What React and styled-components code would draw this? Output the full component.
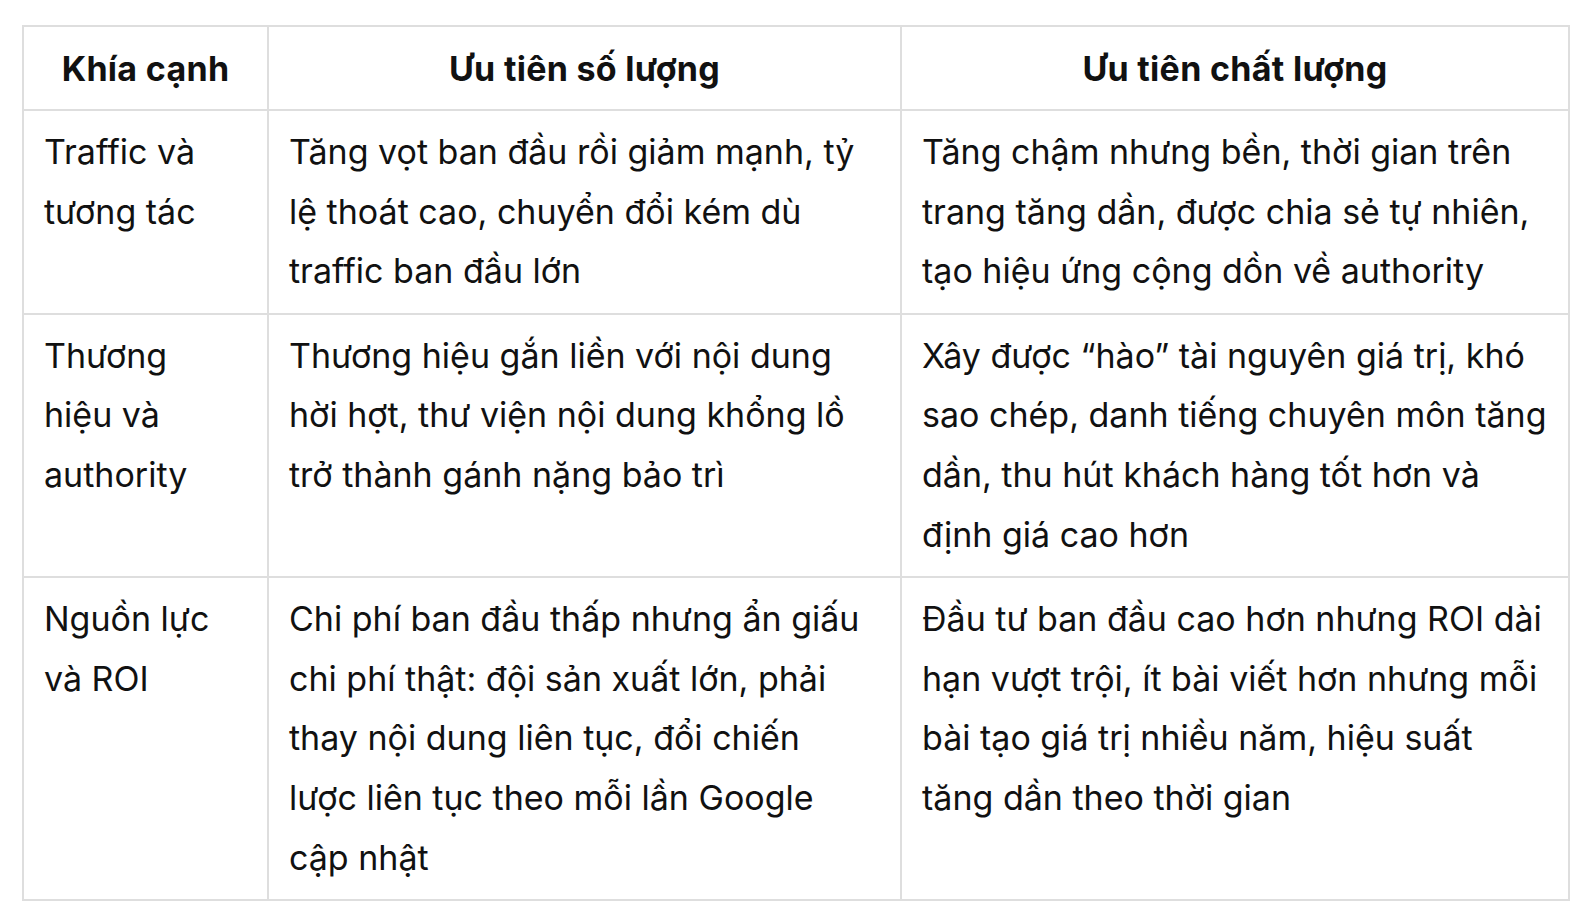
import styled, { createGlobalStyle } from "styled-components";

const GlobalStyle = createGlobalStyle`
  html, body {
    margin: 0;
    padding: 0;
    background: #ffffff;
  }
  body {
    font-family: Inter, "Noto Sans", sans-serif;
    color: #111111;
  }
`;

const Page = styled.div`
  padding: 25px 24px 20px 22px;
`;

const Table = styled.table`
  width: 1546px;
  border-collapse: collapse;
  table-layout: fixed;
  border: 2px solid #dedede;
`;

const Col = styled.col`
  width: ${(p) => p.$w}px;
`;

const HeadCell = styled.th`
  border: 2px solid #dedede;
  padding: 12px 20px 11px;
  font-size: 34px;
  line-height: 59px;
  font-weight: 700;
  text-align: center;
  letter-spacing: 0.3px;
`;

const Cell = styled.td`
  border: 2px solid #dedede;
  padding: 11px ${(p) => p.$padRight || 20}px 12px 20px;
  font-size: 34px;
  line-height: 59.6px;
  font-weight: 400;
  vertical-align: top;
  text-align: left;
  letter-spacing: 0;
`;

const rows = [
  {
    aspect: "Traffic và tương tác",
    quantity:
      "Tăng vọt ban đầu rồi giảm mạnh, tỷ lệ thoát cao, chuyển đổi kém dù traffic ban đầu lớn",
    quality:
      "Tăng chậm nhưng bền, thời gian trên trang tăng dần, được chia sẻ tự nhiên, tạo hiệu ứng cộng dồn về authority",
  },
  {
    aspect: "Thương hiệu và authority",
    quantity:
      "Thương hiệu gắn liền với nội dung hời hợt, thư viện nội dung khổng lồ trở thành gánh nặng bảo trì",
    quality:
      "Xây được “hào” tài nguyên giá trị, khó sao chép, danh tiếng chuyên môn tăng dần, thu hút khách hàng tốt hơn và định giá cao hơn",
  },
  {
    aspect: "Nguồn lực và ROI",
    quantity:
      "Chi phí ban đầu thấp nhưng ẩn giấu chi phí thật: đội sản xuất lớn, phải thay nội dung liên tục, đổi chiến lược liên tục theo mỗi lần Google cập nhật",
    quality:
      "Đầu tư ban đầu cao hơn nhưng ROI dài hạn vượt trội, ít bài viết hơn nhưng mỗi bài tạo giá trị nhiều năm, hiệu suất tăng dần theo thời gian",
  },
];

export default function App() {
  return (
    <>
      <GlobalStyle />
      <Page>
        <Table>
          <colgroup>
            <Col $w={245} />
            <Col $w={633} />
            <Col $w={668} />
          </colgroup>
          <thead>
            <tr>
              <HeadCell>Khía cạnh</HeadCell>
              <HeadCell>Ưu tiên số lượng</HeadCell>
              <HeadCell>Ưu tiên chất lượng</HeadCell>
            </tr>
          </thead>
          <tbody>
            {rows.map((row) => (
              <tr key={row.aspect}>
                <Cell $padRight={34}>{row.aspect}</Cell>
                <Cell $padRight={30}>{row.quantity}</Cell>
                <Cell $padRight={20}>{row.quality}</Cell>
              </tr>
            ))}
          </tbody>
        </Table>
      </Page>
    </>
  );
}
